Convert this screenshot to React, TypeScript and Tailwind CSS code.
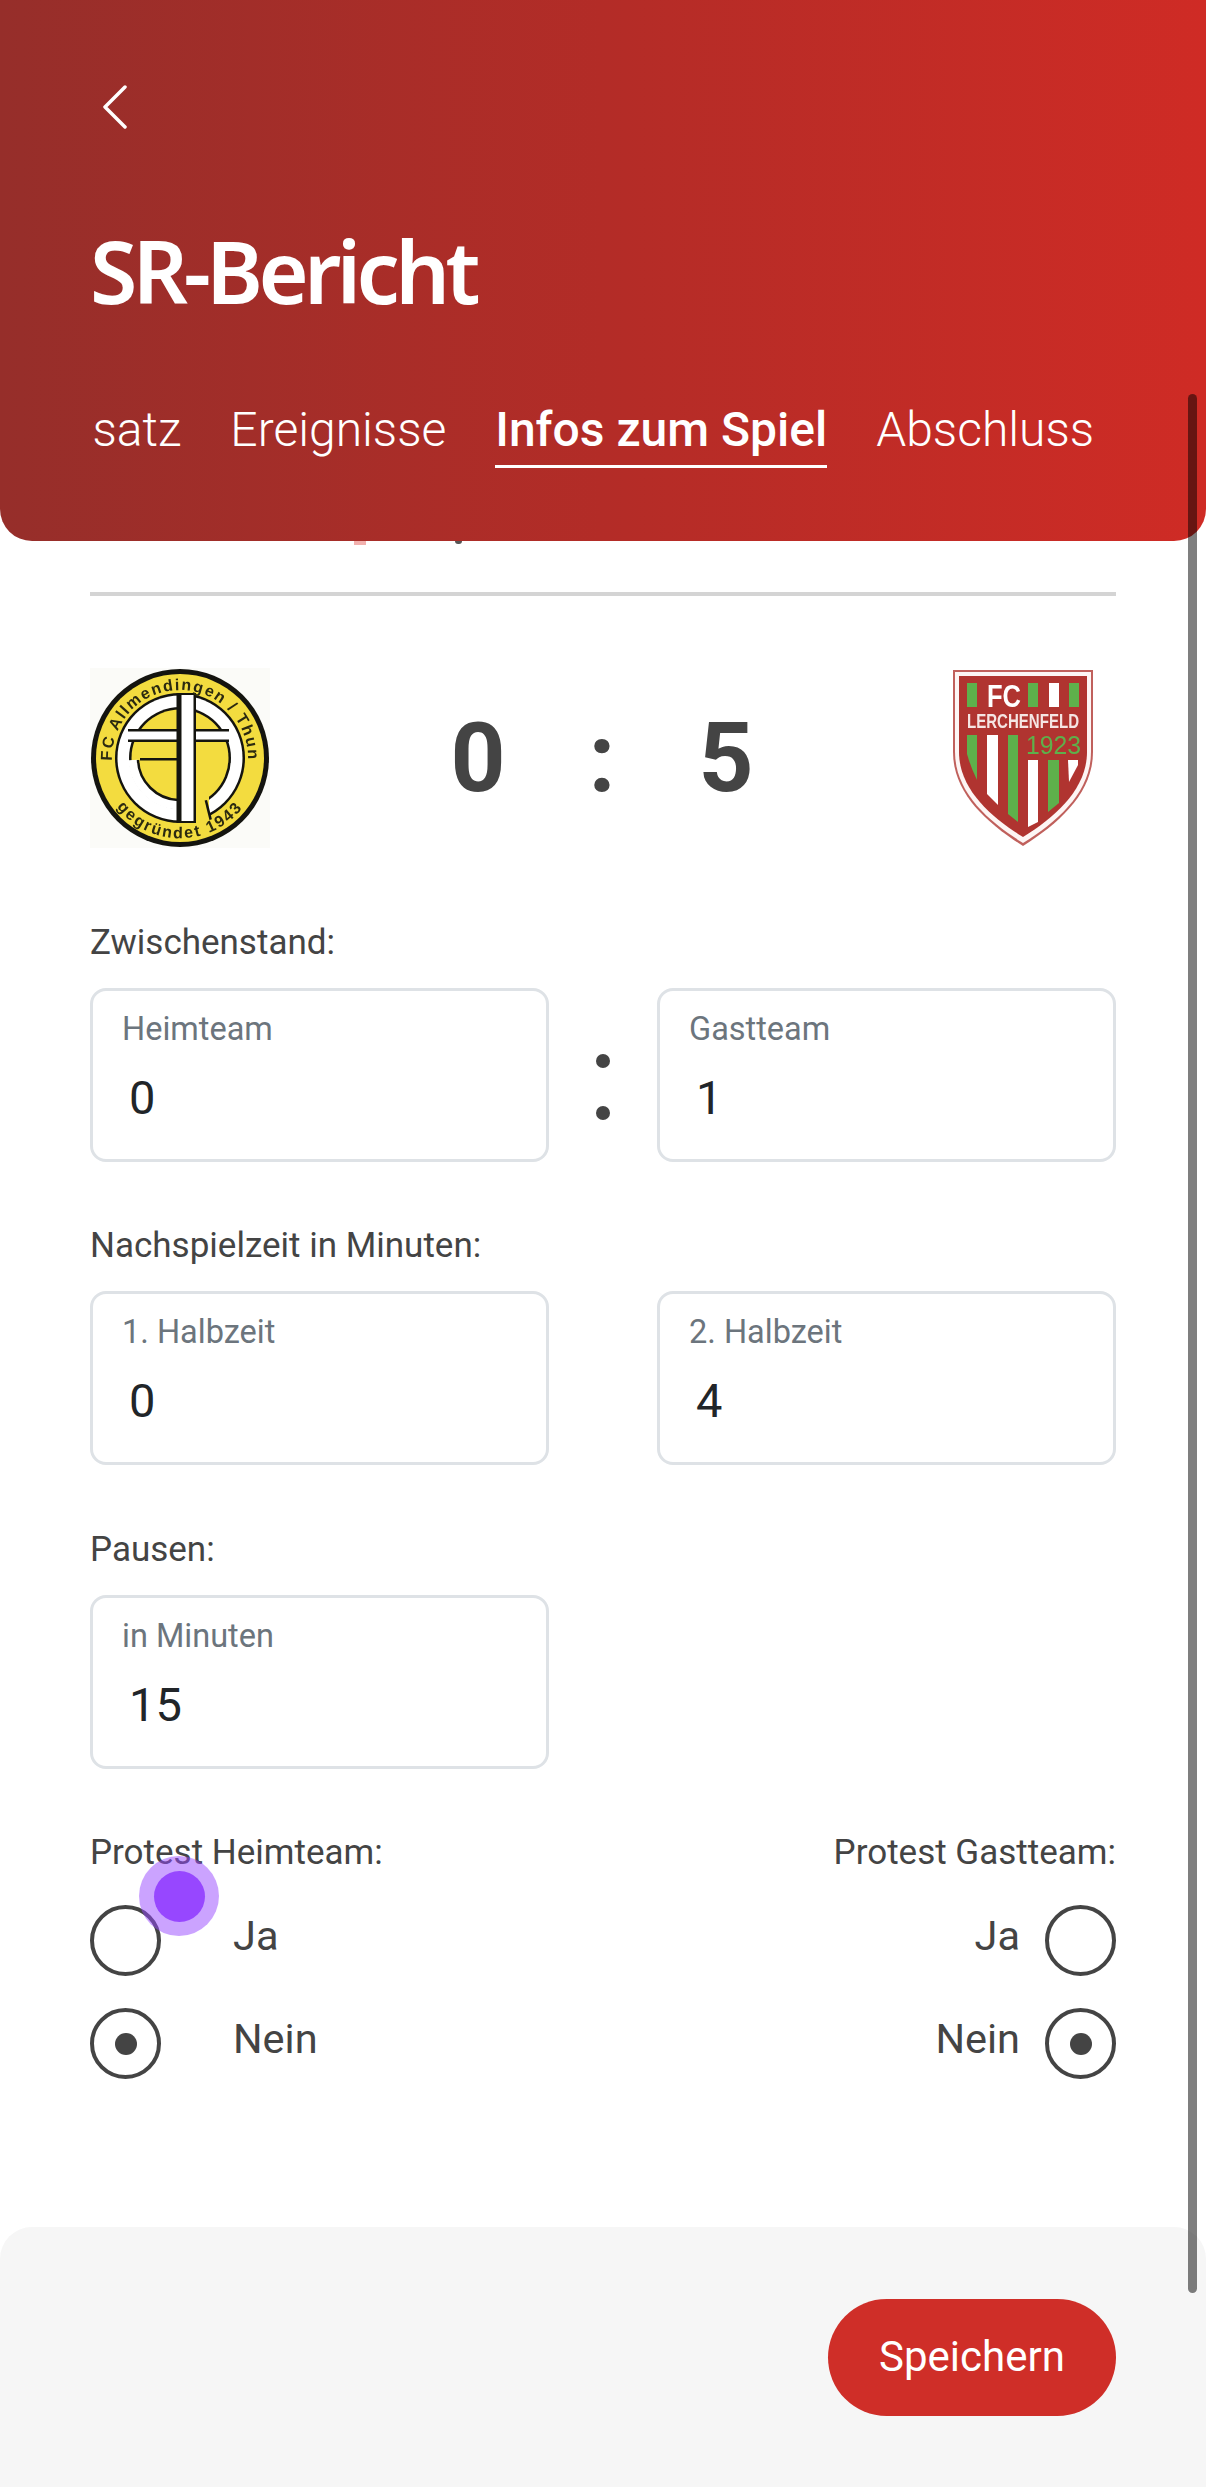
import React from "react";

const INK = "#14140f";
const YELLOW = "#f3dc3f";

const HomeLogo = () => (
  <svg width="180" height="180" viewBox="0 0 180 180" className="blur-[0.4px]">
    <defs>
      <path id="topArc" d="M26 113 A68 68 0 1 1 154 113" />
      <path id="botArc" d="M12 108 A80 80 0 0 0 168 108" />
    </defs>
    <rect width="180" height="180" fill="#fbfbf8" />
    <circle cx="90" cy="90" r="89" fill={INK} />
    <circle cx="90" cy="90" r="84" fill={YELLOW} />
    <circle cx="90" cy="90" r="65" fill={INK} />
    <circle cx="90" cy="90" r="62.5" fill="#fff" />
    <circle cx="90" cy="90" r="51" fill={INK} />
    <circle cx="90" cy="90" r="48.5" fill={YELLOW} />
    {/* lower left of the C sits closer in */}
    <path d="M43 92 A47 47 0 0 0 88 137" fill="none" stroke="#fff" strokeWidth="9" />
    <path d="M48 92 A42 42 0 0 0 88 132" fill="none" stroke={INK} strokeWidth="2.5" />
    {/* opening at the foot of the A */}
    <rect x="105" y="112" width="14" height="52" fill={YELLOW} />
    <rect x="117" y="132" width="2.5" height="20" fill={INK} transform="rotate(-14 118 142)" />
    {/* bars of the E and the A */}
    <rect x="38" y="61" width="50" height="13" fill={INK} />
    <rect x="38" y="63.5" width="50" height="8" fill="#fff" />
    <rect x="50" y="90" width="38" height="2.5" fill={INK} />
    <rect x="103" y="61" width="36" height="13" fill={INK} />
    <rect x="103" y="63.5" width="36" height="8" fill="#fff" />
    {/* spine */}
    <rect x="86.5" y="25" width="19.5" height="130" fill={INK} />
    <rect x="91.5" y="27" width="12" height="126" fill="#fff" />
    <text fontFamily="Liberation Sans, sans-serif" fontWeight="700" fontSize="16" letterSpacing="1.6" fill="#2b2a10">
      <textPath href="#topArc" startOffset="50%" textAnchor="middle">FC Allmendingen / Thun</textPath>
    </text>
    <text fontFamily="Liberation Sans, sans-serif" fontWeight="700" fontSize="16" letterSpacing="2" fill="#2b2a10">
      <textPath href="#botArc" startOffset="50%" textAnchor="middle">gegründet 1943</textPath>
    </text>
  </svg>
);

const AwayLogo = () => (
  <svg width="140" height="176" viewBox="0 0 140 176" className="blur-[0.5px]">
    <path d="M0 0 H140 V82 C140 122 108 152 70 176 C32 152 0 122 0 82 Z" fill="#c0605c" />
    <path d="M2 2 H138 V82 C138 121 107 150 70 173 C33 150 2 121 2 82 Z" fill="#fdf5f4" />
    <path d="M6 6 H134 V82 C134 118 104 146 70 167 C36 146 6 118 6 82 Z" fill="#b03430" />
    <rect x="14" y="13" width="10" height="24" fill="#5eb04b" />
    <rect x="75" y="13" width="10" height="24" fill="#5eb04b" />
    <rect x="96" y="13" width="10" height="24" fill="#fff" />
    <rect x="116" y="13" width="10" height="24" fill="#5eb04b" />
    <path d="M14 65 H24 V110 Q18 98 14 84 Z" fill="#5eb04b" />
    <path d="M34 65 H45 V135 L34 124 Z" fill="#fff" />
    <path d="M55 65 H65 V152 L55 144 Z" fill="#5eb04b" />
    <path d="M75 90 H85 V152 L75 157 Z" fill="#fff" />
    <path d="M95 90 H106 V133 L95 142 Z" fill="#5eb04b" />
    <path d="M115 90 H125 V95 L116 112 Z" fill="#fff" />
    <text x="34" y="37" fontFamily="Liberation Sans, sans-serif" fontWeight="700" fontSize="32" fill="#fff" textLength="34" lengthAdjust="spacingAndGlyphs">FC</text>
    <text x="14" y="58" fontFamily="Liberation Sans, sans-serif" fontWeight="700" fontSize="20" fill="#f5e5e3" textLength="112" lengthAdjust="spacingAndGlyphs">LERCHENFELD</text>
    <text x="73" y="84" fontFamily="Liberation Sans, sans-serif" fontWeight="400" fontSize="25" fill="#5eb04b" textLength="55" lengthAdjust="spacingAndGlyphs">1923</text>
  </svg>
);

const FloatingField = ({ label, value }: { label: string; value: string }) => (
  <div className="h-[174px] w-[459px] shrink-0 rounded-[16px] border-[3px] border-[#dee2e6] bg-white pl-[29px] pt-[16px]">
    <div className="text-[32.5px] leading-[44px] text-[#6c757d]">{label}</div>
    <div className="mt-[17px] pl-[7px] text-[47px] leading-[60px] text-[#212529]">{value}</div>
  </div>
);

const Radio = ({ checked }: { checked?: boolean }) => (
  <span className="flex h-[71px] w-[71px] shrink-0 items-center justify-center rounded-full border-[4px] border-[#444444]">
    {checked && <span className="h-[22px] w-[22px] rounded-full bg-[#444444]" />}
  </span>
);

const SectionLabel = ({ children }: { children: React.ReactNode }) => (
  <div className="text-[35px] leading-[46px] text-[#444444]">{children}</div>
);

export default function App() {
  return (
    <div className="relative h-[2487px] w-[1206px] overflow-hidden bg-white font-['Roboto',sans-serif]">
      <header className="relative z-10 h-[541px] rounded-b-[32px] bg-linear-to-r from-[#962e2a] via-[#b32c27] to-[#cf2b25] pl-[91px] pr-[91px] pt-[85px] text-white">
        <svg width="26" height="44" viewBox="0 0 26 44" fill="none" className="ml-[11px]">
          <path d="M23 2 L3 22 L23 42" stroke="#fff" strokeWidth="3.5" strokeLinecap="round" strokeLinejoin="round" />
        </svg>
        <h1 className="mt-[92px] -ml-[1px] font-['Noto_Sans',sans-serif] text-[86px] font-semibold leading-[100px] tracking-[-4.6px]">
          SR-Bericht
        </h1>
        <nav className="mt-[74px] flex h-[74px] items-start gap-[49px] overflow-hidden whitespace-nowrap text-[48px] font-light leading-[70px]">
          <span className="-ml-[63px]">Einsatz</span>
          <span>Ereignisse</span>
          <span className="border-b-[3px] border-white font-medium">Infos zum Spiel</span>
          <span>Abschluss</span>
        </nav>
      </header>

      {/* text scrolled away behind the header */}
      <div className="absolute left-[354px] top-[541px] h-[4px] w-[12px] bg-[#f2b1ae]" />
      <div className="absolute left-[455px] top-[541px] h-[3px] w-[7px] rounded-b-full bg-[#555555]" />

      <main className="px-[90px]">
        <div className="mt-[51px] h-[4px] bg-[#d4d4d4]" />

        <div className="mt-[72px] flex items-center justify-between">
          <HomeLogo />
          <div className="mr-[19px] flex items-center gap-[83px] text-[96px] font-bold leading-[112px] text-[#444444]">
            <span>0</span>
            <span>:</span>
            <span>5</span>
          </div>
          <div className="pr-[23px]">
            <AwayLogo />
          </div>
        </div>

        <div className="mt-[72px]">
          <SectionLabel>Zwischenstand:</SectionLabel>
          <div className="mt-[22px] flex items-center justify-between">
            <FloatingField label="Heimteam" value="0" />
            <div className="flex flex-col gap-[38px] pt-[24px]">
              <span className="h-[14px] w-[14px] rounded-full bg-[#444444]" />
              <span className="h-[14px] w-[14px] rounded-full bg-[#444444]" />
            </div>
            <FloatingField label="Gastteam" value="1" />
          </div>
        </div>

        <div className="mt-[61px]">
          <SectionLabel>Nachspielzeit in Minuten:</SectionLabel>
          <div className="mt-[22px] flex items-center justify-between">
            <FloatingField label="1. Halbzeit" value="0" />
            <FloatingField label="2. Halbzeit" value="4" />
          </div>
        </div>

        <div className="mt-[62px]">
          <SectionLabel>Pausen:</SectionLabel>
          <div className="mt-[22px]">
            <FloatingField label="in Minuten" value="15" />
          </div>
        </div>

        <div className="mt-[61px] flex justify-between text-[#444444]">
          <div>
            <SectionLabel>Protest Heimteam:</SectionLabel>
            <div className="mt-[29px] flex items-center gap-[72px]">
              <Radio />
              <span className="-mt-[8px] text-[41.5px]">Ja</span>
            </div>
            <div className="mt-[32px] flex items-center gap-[72px]">
              <Radio checked />
              <span className="-mt-[8px] text-[41.5px]">Nein</span>
            </div>
          </div>
          <div className="flex flex-col items-end">
            <SectionLabel>Protest Gastteam:</SectionLabel>
            <div className="mt-[29px] flex items-center gap-[25px]">
              <span className="-mt-[8px] text-[41.5px]">Ja</span>
              <Radio />
            </div>
            <div className="mt-[32px] flex items-center gap-[25px]">
              <span className="-mt-[8px] text-[41.5px]">Nein</span>
              <Radio checked />
            </div>
          </div>
        </div>
      </main>

      <footer className="absolute bottom-0 left-0 right-0 flex h-[260px] items-start justify-end rounded-t-[32px] bg-[#f6f6f6] pr-[90px] pt-[72px]">
        <button className="h-[117px] w-[288px] rounded-full bg-[#cf2e28] pb-[2px] text-[42px] text-white">Speichern</button>
      </footer>

      {/* overlay scrollbar */}
      <div className="absolute left-[1188px] top-[394px] z-20 h-[1899px] w-[9px] rounded-full bg-black/50" />
      {/* touch indicator */}
      <div className="absolute left-[139px] top-[1856px] z-20 flex h-[80px] w-[80px] items-center justify-center rounded-full bg-[#9747ff]/50">
        <div className="h-[51px] w-[51px] rounded-full bg-[#9747ff]" />
      </div>
    </div>
  );
}
